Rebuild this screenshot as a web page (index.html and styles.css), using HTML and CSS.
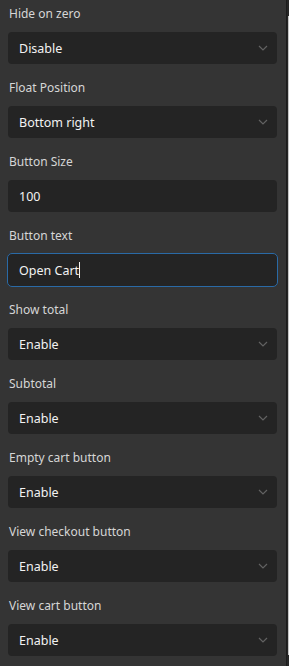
FILE: index.html
```html
<!DOCTYPE html>
<html>
	<head>
		<meta charset="UTF-8">
		<title>Cart settings</title>
		<link rel="stylesheet" href="styles.css">
	</head>
	<body>
		<div class="wrap">
			<div class="panel">
				<div class="field">
					<div class="label">Hide on zero</div>
					<div class="select">Disable<svg class="chev" width="10" height="6" viewBox="0 0 10 6"><path d="M1 1l4 4 4-4" fill="none" stroke="#626262" stroke-width="1.2"/></svg></div>
				</div>
				<div class="field">
					<div class="label">Float Position</div>
					<div class="select">Bottom right<svg class="chev" width="10" height="6" viewBox="0 0 10 6"><path d="M1 1l4 4 4-4" fill="none" stroke="#626262" stroke-width="1.2"/></svg></div>
				</div>
				<div class="field">
					<div class="label">Button Size</div>
					<div class="input">100</div>
				</div>
				<div class="field">
					<div class="label">Button text</div>
					<div class="input focus">Open Cart<span class="caret"></span></div>
				</div>
				<div class="field">
					<div class="label">Show total</div>
					<div class="select">Enable<svg class="chev" width="10" height="6" viewBox="0 0 10 6"><path d="M1 1l4 4 4-4" fill="none" stroke="#626262" stroke-width="1.2"/></svg></div>
				</div>
				<div class="field">
					<div class="label">Subtotal</div>
					<div class="select">Enable<svg class="chev" width="10" height="6" viewBox="0 0 10 6"><path d="M1 1l4 4 4-4" fill="none" stroke="#626262" stroke-width="1.2"/></svg></div>
				</div>
				<div class="field">
					<div class="label">Empty cart button</div>
					<div class="select">Enable<svg class="chev" width="10" height="6" viewBox="0 0 10 6"><path d="M1 1l4 4 4-4" fill="none" stroke="#626262" stroke-width="1.2"/></svg></div>
				</div>
				<div class="field">
					<div class="label">View checkout button</div>
					<div class="select">Enable<svg class="chev" width="10" height="6" viewBox="0 0 10 6"><path d="M1 1l4 4 4-4" fill="none" stroke="#626262" stroke-width="1.2"/></svg></div>
				</div>
				<div class="field">
					<div class="label">View cart button</div>
					<div class="select">Enable<svg class="chev" width="10" height="6" viewBox="0 0 10 6"><path d="M1 1l4 4 4-4" fill="none" stroke="#626262" stroke-width="1.2"/></svg></div>
				</div>
			</div>
			<div class="rail">
				<div class="thumb"></div>
			</div>
		</div>
	</body>
</html>
```

FILE: styles.css
```css
*{
	padding: 0;
	margin: 0;
	box-sizing: border-box;
}
html, body{
	height: 100%;
}
body{
	background: #343434;
	font-family: "Noto Sans", "Open Sans", sans-serif;
	overflow: hidden;
}
.wrap{
	display: flex;
	height: 666px;
}
.panel{
	flex: 1;
	padding: 4px 8px 0 8px;
}
.field{
	margin-bottom: 14px;
}
.label{
	height: 20px;
	line-height: 20px;
	margin-bottom: 8px;
	padding-left: 1px;
	font-size: 12px;
	color: #d6d6d6;
}
.select, .input{
	display: flex;
	align-items: center;
	height: 32px;
	width: 269px;
	padding-left: 11px;
	background: #242424;
	border-radius: 4px;
	font-size: 12.5px;
	color: #f2f2f2;
}
.chev{
	margin-left: auto;
	margin-right: 9px;
}
.input.focus{
	height: 34px;
	width: 271px;
	margin: -1px 0 -1px -1px;
	padding-left: 11px;
	border: 1px solid #2a6aa6;
	border-radius: 5px;
}
.caret{
	display: inline-block;
	width: 1px;
	height: 16px;
	background: #f2f2f2;
}
.rail{
	width: 4px;
	background: #262626;
	border-left: 1px solid #1c1c1c;
	padding-top: 16px;
}
.thumb{
	margin-left: 1px;
	width: 2px;
	height: 639px;
	background: #c6c6c6;
}
```
